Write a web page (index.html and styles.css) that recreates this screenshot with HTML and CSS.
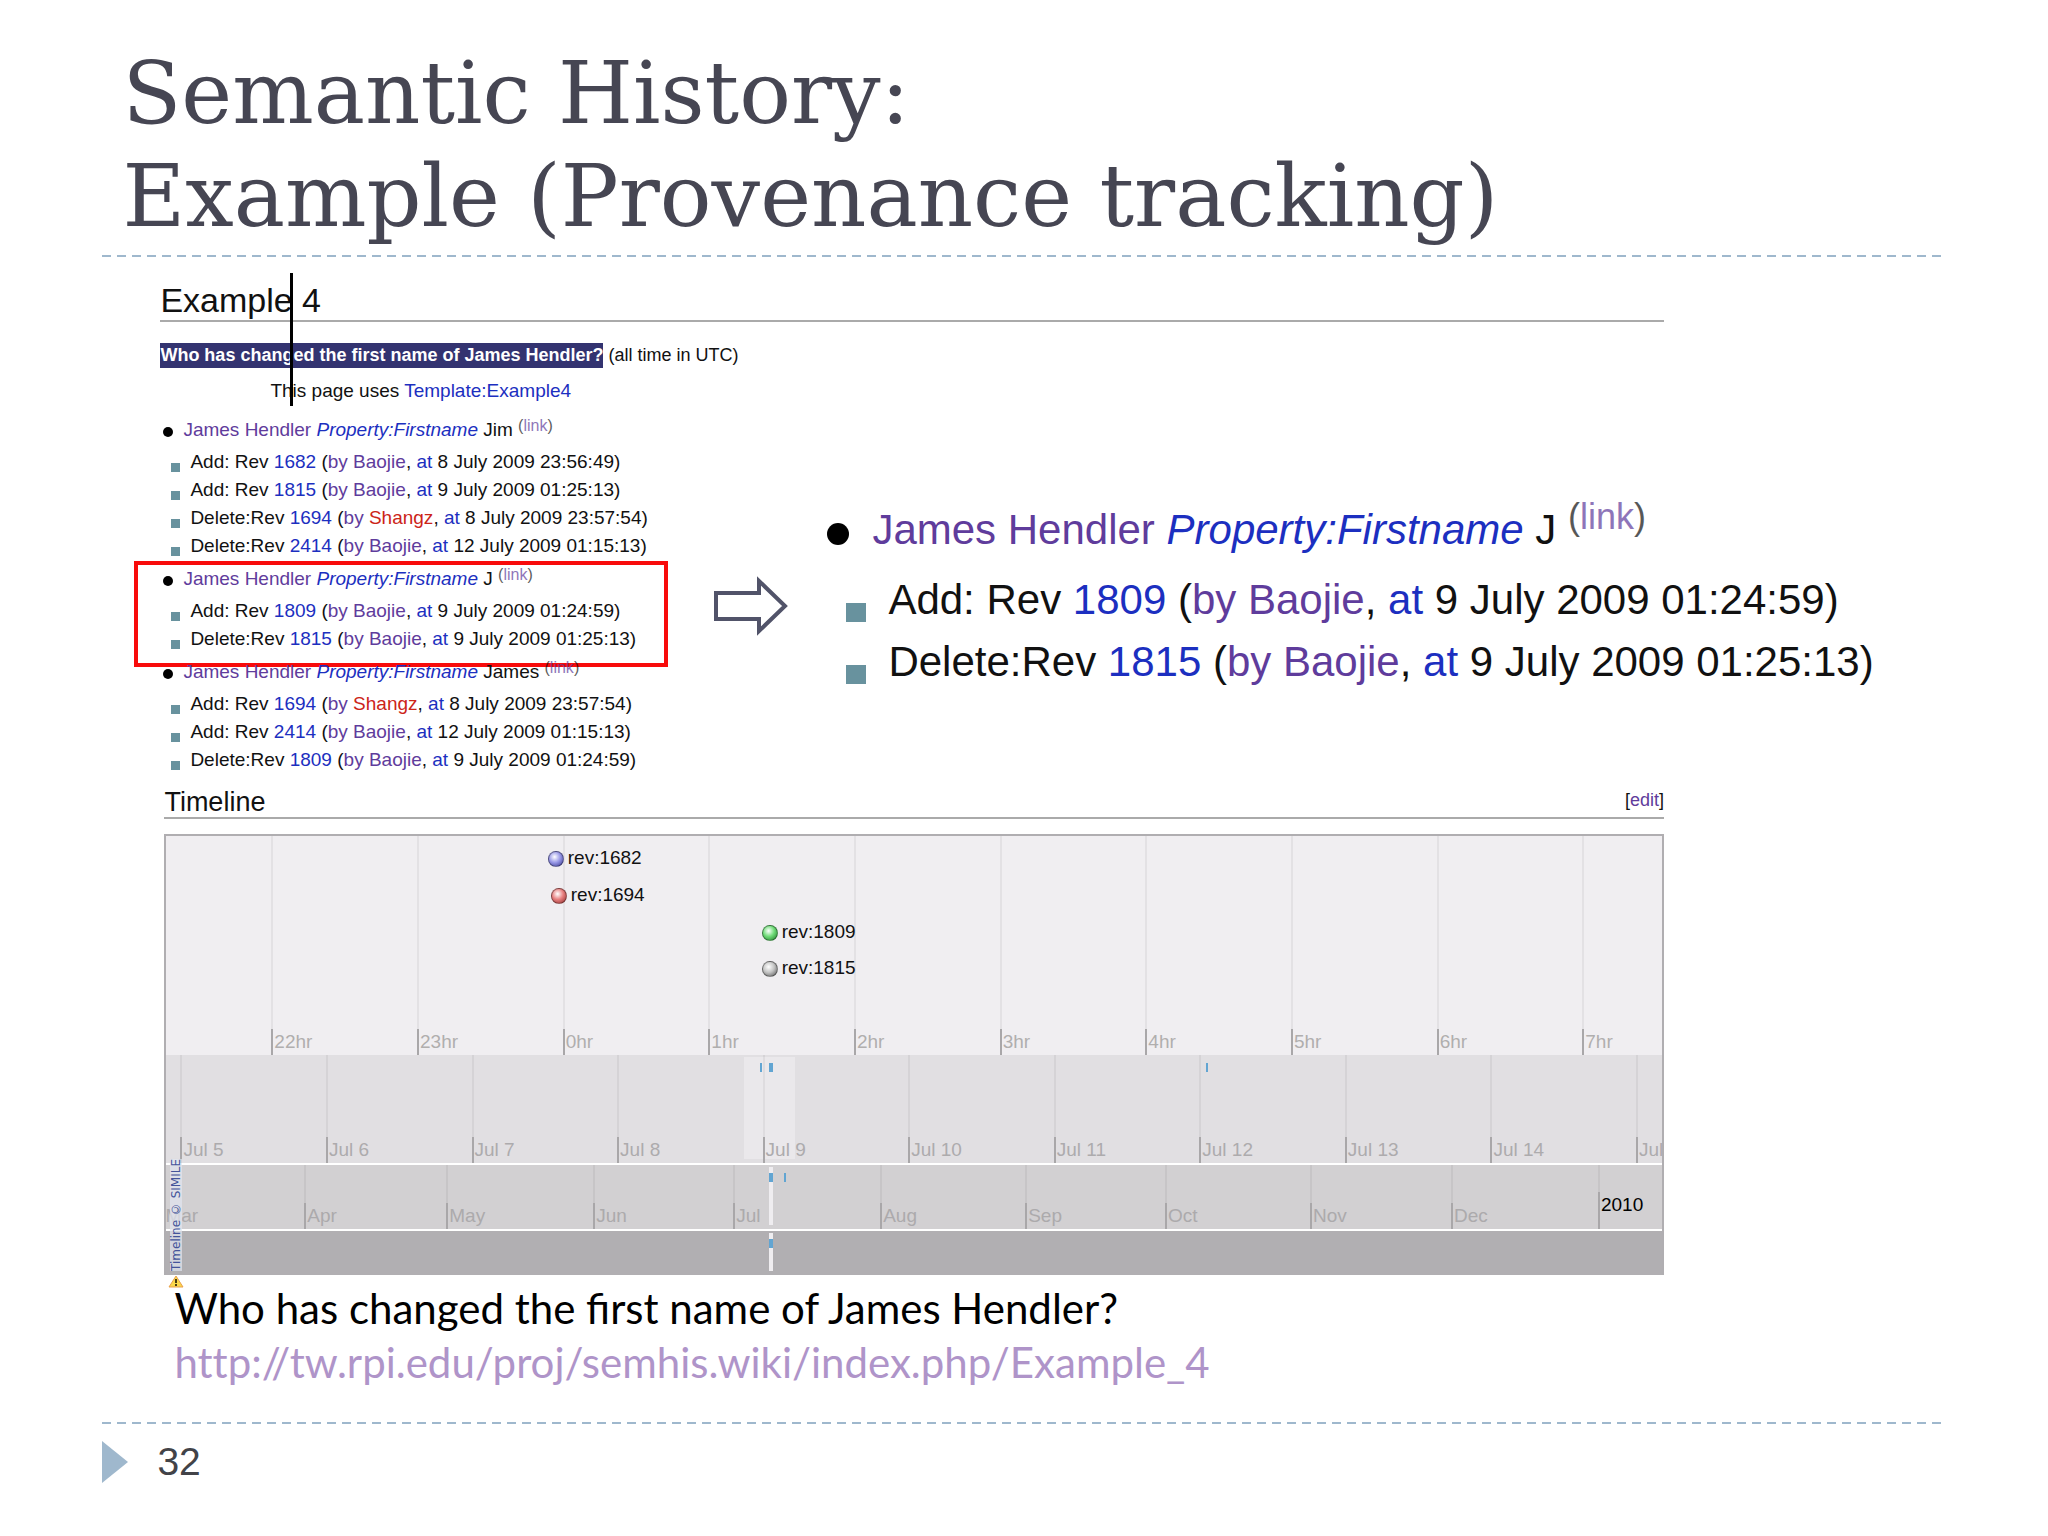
FILE: index.html
```
<!DOCTYPE html>
<html lang="en">
<head>
  <meta charset="UTF-8">
  <meta name="viewport" content="width=device-width, initial-scale=1.0">
  <title>Semantic History: Example</title>
  <link rel="stylesheet" href="styles.css">
</head>
<body>
  <div class="slide">
    <header class="slide-header">
      <h1 class="slide-title">Semantic History:<br>Example (Provenance tracking)</h1>
    </header>

    <main class="slide-body">
      <!-- Wiki page heading -->
      <section class="wiki-head">
        <h2 class="wiki-title">Example 4</h2>
        <p class="question"><strong class="selected">Who has changed the first name of James Hendler?</strong> (all time in UTC)</p>
        <p class="template">This page uses <a href="#">Template:Example4</a></p>
        <span class="cursor-line"></span>
      </section>

      <!-- Revision facts and the enlarged one -->
      <section class="compare">
        <div class="facts">
          <div class="fact">
            <h3><a class="visited" href="#">James Hendler</a> <a href="#"><em>Property:Firstname</em></a> Jim <sup>(<a class="visited" href="#">link</a>)</sup></h3>
            <ul>
              <li>Add: Rev <a href="#">1682</a> (<a class="visited" href="#">by Baojie</a>, <a href="#">at</a> 8 July 2009 23:56:49)</li>
              <li>Add: Rev <a href="#">1815</a> (<a class="visited" href="#">by Baojie</a>, <a href="#">at</a> 9 July 2009 01:25:13)</li>
              <li>Delete:Rev <a href="#">1694</a> (<a class="visited" href="#">by</a> <a class="missing" href="#">Shangz</a>, <a href="#">at</a> 8 July 2009 23:57:54)</li>
              <li>Delete:Rev <a href="#">2414</a> (<a class="visited" href="#">by Baojie</a>, <a href="#">at</a> 12 July 2009 01:15:13)</li>
            </ul>
          </div>
          <div class="fact marked">
            <h3><a class="visited" href="#">James Hendler</a> <a href="#"><em>Property:Firstname</em></a> J <sup>(<a class="visited" href="#">link</a>)</sup></h3>
            <ul>
              <li>Add: Rev <a href="#">1809</a> (<a class="visited" href="#">by Baojie</a>, <a href="#">at</a> 9 July 2009 01:24:59)</li>
              <li>Delete:Rev <a href="#">1815</a> (<a class="visited" href="#">by Baojie</a>, <a href="#">at</a> 9 July 2009 01:25:13)</li>
            </ul>
          </div>
          <div class="fact">
            <h3><a class="visited" href="#">James Hendler</a> <a href="#"><em>Property:Firstname</em></a> James <sup>(<a class="visited" href="#">link</a>)</sup></h3>
            <ul>
              <li>Add: Rev <a href="#">1694</a> (<a class="visited" href="#">by</a> <a class="missing" href="#">Shangz</a>, <a href="#">at</a> 8 July 2009 23:57:54)</li>
              <li>Add: Rev <a href="#">2414</a> (<a class="visited" href="#">by Baojie</a>, <a href="#">at</a> 12 July 2009 01:15:13)</li>
              <li>Delete:Rev <a href="#">1809</a> (<a class="visited" href="#">by Baojie</a>, <a href="#">at</a> 9 July 2009 01:24:59)</li>
            </ul>
          </div>
        </div>

        <svg class="arrow" width="74" height="60" viewBox="0 0 74 60" aria-hidden="true">
          <path d="M2 17 H45 V5 L71 30 L45 55 V43 H2 Z" fill="#fff" stroke="#515369" stroke-width="4"/>
        </svg>

        <div class="fact zoomed">
          <h3><a class="visited" href="#">James Hendler</a> <a href="#"><em>Property:Firstname</em></a> J <sup>(<a class="visited" href="#">link</a>)</sup></h3>
          <ul>
            <li>Add: Rev <a href="#">1809</a> (<a class="visited" href="#">by Baojie</a>, <a href="#">at</a> 9 July 2009 01:24:59)</li>
            <li>Delete:Rev <a href="#">1815</a> (<a class="visited" href="#">by Baojie</a>, <a href="#">at</a> 9 July 2009 01:25:13)</li>
          </ul>
        </div>
      </section>

      <!-- Timeline -->
      <section class="timeline">
        <div class="timeline-head">
          <h2>Timeline</h2>
          <span class="edit">[<a class="visited" href="#">edit</a>]</span>
        </div>
        <div class="bands">
          <div class="band hours">
            <div class="cell first"></div>
            <div class="cell"><span>22hr</span></div>
            <div class="cell"><span>23hr</span></div>
            <div class="cell"><span>0hr</span></div>
            <div class="cell"><span>1hr</span></div>
            <div class="cell"><span>2hr</span></div>
            <div class="cell"><span>3hr</span></div>
            <div class="cell"><span>4hr</span></div>
            <div class="cell"><span>5hr</span></div>
            <div class="cell"><span>6hr</span></div>
            <div class="cell"><span>7hr</span></div>
            <div class="event blue">rev:1682</div>
            <div class="event red">rev:1694</div>
            <div class="event green">rev:1809</div>
            <div class="event gray">rev:1815</div>
          </div>
          <div class="band days">
            <div class="window"></div>
            <div class="cell first"></div>
            <div class="cell"><span>Jul 5</span></div>
            <div class="cell"><span>Jul 6</span></div>
            <div class="cell"><span>Jul 7</span></div>
            <div class="cell"><span>Jul 8</span></div>
            <div class="cell"><span>Jul 9</span></div>
            <div class="cell"><span>Jul 10</span></div>
            <div class="cell"><span>Jul 11</span></div>
            <div class="cell"><span>Jul 12</span></div>
            <div class="cell"><span>Jul 13</span></div>
            <div class="cell"><span>Jul 14</span></div>
            <div class="cell"><span>Jul</span></div>
            <i class="mark day-a"></i>
            <i class="mark wide now"></i>
            <i class="mark day-b"></i>
          </div>
          <div class="band months">
            <div class="cell first"><span>Mar</span></div>
            <div class="cell"><span>Apr</span></div>
            <div class="cell"><span>May</span></div>
            <div class="cell"><span>Jun</span></div>
            <div class="cell"><span>Jul</span></div>
            <div class="cell"><span>Aug</span></div>
            <div class="cell"><span>Sep</span></div>
            <div class="cell"><span>Oct</span></div>
            <div class="cell"><span>Nov</span></div>
            <div class="cell"><span>Dec</span></div>
            <div class="cell year"><span>2010</span></div>
            <i class="needle now"></i>
            <i class="mark wide now"></i>
            <i class="mark month-a"></i>
          </div>
          <div class="band years">
            <i class="needle now"></i>
            <i class="mark wide now"></i>
          </div>
          <div class="credit">
            <span>Timeline © SIMILE</span>
            <svg width="16" height="13" viewBox="0 0 16 13" aria-hidden="true">
              <path d="M8 1 L15 12 H1 Z" fill="#fbd84a" stroke="#e9a04c" stroke-width="1"/>
              <path d="M8 4 V8 M8 9 V11" stroke="#4a3c10" stroke-width="2"/>
            </svg>
          </div>
        </div>
      </section>

      <p class="caption">Who has changed the first name of James Hendler?<br><a href="#">http://tw.rpi.edu/proj/semhis.wiki/index.php/Example_4</a></p>
    </main>

    <footer class="slide-footer">
      <svg width="26" height="42" viewBox="0 0 26 42" aria-hidden="true">
        <path d="M0 0 L26 21 L0 42 Z" fill="#9fb8cd"/>
      </svg>
      <span class="page-number">32</span>
    </footer>
  </div>
</body>
</html>
```
FILE: styles.css
```
:root {
  --rule: #9fb8cd;
  --title: #464653;
  --link: #1c2fc0;
  --visited: #5f3c9c;
  --missing: #cc2418;
  --bullet: #68929e;
  --line: #aaaaaa;
  --mark: #62a5d2;
  --wiki-width: calc(84% + 4px);
}

* {
  margin: 0;
  padding: 0;
  box-sizing: border-box;
}

body {
  font-family: "Liberation Sans", Arial, sans-serif;
  background: #fff;
  color: #111;
}

a {
  color: var(--link);
  text-decoration: none;
}

a.visited {
  color: var(--visited);
}

a.missing {
  color: var(--missing);
}

.slide {
  padding: 42px 5% 0;
}

/* Dashed rules above and below the content */
.slide-header,
.slide-footer {
  background: repeating-linear-gradient(to right, var(--rule) 0 9px, transparent 9px 15px) no-repeat;
  background-size: 100% 2px;
}

.slide-header {
  padding: 0 0 9px 20px;
  background-position: left bottom;
}

.slide-title {
  font-family: "DejaVu Serif", serif;
  font-size: 86px;
  font-weight: 400;
  line-height: 103px;
  color: var(--title);
}

.slide-body {
  padding-left: 58px;
}

/* Wiki heading */
.wiki-head {
  position: relative;
  width: var(--wiki-width);
  margin-top: 23px;
}

.wiki-title {
  font-size: 34px;
  font-weight: 400;
  line-height: 40px;
  border-bottom: 2px solid var(--line);
}

.question {
  margin-top: 21px;
  font-size: 18px;
  line-height: 25px;
}

.selected {
  display: inline-block;
  background: #333370;
  color: #fff;
}

.template {
  margin-top: 9px;
  padding-left: 110px;
  font-size: 19px;
  line-height: 28px;
}

.cursor-line {
  position: absolute;
  left: 130px;
  top: -7px;
  width: 3px;
  height: 133px;
  background: #000;
}

/* Revision facts */
.compare {
  display: flex;
  align-items: flex-start;
  margin-top: 10px;
}

.facts {
  width: 554px;
  flex-shrink: 0;
}

.fact {
  position: relative;
  padding-bottom: 4px;
  font-size: 19px;
  white-space: nowrap;
}

.fact h3 {
  margin-bottom: 3px;
  font-size: 19px;
  font-weight: 400;
  line-height: 30px;
}

.fact h3::before {
  content: "";
  display: inline-block;
  width: 10px;
  height: 10px;
  margin: 0 10px 0 3px;
  border-radius: 50%;
  background: #000;
  vertical-align: -1px;
}

.fact sup {
  font-size: 16px;
  line-height: 0;
  vertical-align: 5px;
  opacity: 0.7;
}

.fact ul {
  list-style: none;
}

.fact li {
  line-height: 28px;
}

.fact li::before {
  content: "";
  display: inline-block;
  width: 9px;
  height: 9px;
  margin: 0 10px 0 11px;
  background: var(--bullet);
  vertical-align: -4px;
}

.marked::after {
  content: "";
  position: absolute;
  left: -26px;
  right: 46px;
  top: -3px;
  bottom: -10px;
  border: 4px solid #f80b0b;
}

.arrow {
  flex-shrink: 0;
  margin: 161px 38px 0 0;
}

.zoomed {
  margin-top: 84px;
  font-size: 42px;
}

.zoomed h3 {
  margin-bottom: 8px;
  font-size: 42px;
  line-height: 62px;
}

.zoomed h3::before {
  width: 22px;
  height: 22px;
  margin: 0 23px 0 1px;
}

.zoomed sup {
  font-size: 36px;
  vertical-align: 15px;
}

.zoomed li {
  line-height: 62px;
}

.zoomed li::before {
  width: 20px;
  height: 19px;
  margin: 0 22px 0 20px;
  vertical-align: -8px;
}

/* Timeline */
.timeline {
  width: 84%;
  margin: 9px 0 0 4px;
}

.timeline-head {
  display: flex;
  justify-content: space-between;
  border-bottom: 2px solid var(--line);
  line-height: 30px;
}

.timeline-head h2 {
  font-size: 27px;
  font-weight: 400;
}

.edit {
  font-size: 18px;
  line-height: 26px;
}

.bands {
  position: relative;
  margin-top: 15px;
  border: 2px solid #b0aeb1;
  border-bottom: none;
}

.band {
  position: relative;
  display: grid;
  overflow: hidden;
  font-size: 19px;
}

.hours {
  grid-template-columns: 1050fr repeat(9, 1457fr) 797fr;
  height: 219px;
  background: #f0eef1;
}

.days {
  grid-template-columns: 140fr repeat(10, 1456fr) 260fr;
  height: 110px;
  background: #e1dfe2;
  border-bottom: 2px solid #fff;
}

.months {
  grid-template-columns: 138fr 142fr 147fr 140fr 147fr 145fr 140fr 145fr 141fr 147fr 64fr;
  height: 66px;
  background: #d2d0d2;
  border-bottom: 2px solid #fff;
}

.years {
  height: 44px;
  background: #b1afb2;
}

.cell {
  position: relative;
  display: flex;
  align-items: flex-end;
  min-width: 0;
  white-space: nowrap;
  border-left: 2px solid rgba(0, 0, 0, 0.05);
}

.cell span {
  height: 26px;
  margin-left: -2px;
  padding-left: 1px;
  line-height: 25px;
  border-left: 2px solid #a9a7a9;
  color: #b0aeae;
}

.days .cell span {
  color: #adabad;
}

.months .cell span {
  color: #acaaac;
}

.cell.first,
.cell.first span {
  border-left: none;
}

.months .year span {
  height: 37px;
  color: #000;
}

.event {
  position: absolute;
  display: flex;
  align-items: center;
  gap: 4px;
  color: #111;
  line-height: 24px;
}

.event::before {
  content: "";
  width: 14px;
  height: 14px;
  margin-top: 2px;
  border: 1px solid rgba(0, 0, 0, 0.35);
  border-radius: 50%;
  background: radial-gradient(circle at 40% 35%, #fff, var(--dot) 45%, var(--edge));
}

.blue {
  --dot: #9a9ae8;
  --edge: #32328c;
  left: 25.5%;
  top: 10px;
}

.red {
  --dot: #e88080;
  --edge: #8c2828;
  left: 25.7%;
  top: 47px;
}

.green {
  --dot: #70dc78;
  --edge: #1c7828;
  left: 39.8%;
  top: 84px;
}

.gray {
  --dot: #c4c4c4;
  --edge: #505050;
  left: 39.8%;
  top: 120px;
}

.window {
  position: absolute;
  left: 38.6%;
  top: 2px;
  width: 51px;
  height: 102px;
  background: rgba(255, 255, 255, 0.3);
}

.mark {
  position: absolute;
  top: 8px;
  width: 2px;
  height: 9px;
  background: var(--mark);
}

.mark.wide {
  width: 4px;
}

.needle {
  position: absolute;
  top: 2px;
  bottom: 4px;
  width: 4px;
  background: #efedf0;
}

.now {
  left: 40.3%;
}

.day-a {
  left: 39.7%;
}

.day-b {
  left: 69.5%;
}

.month-a {
  left: 41.3%;
}

.credit {
  position: absolute;
  left: 2px;
  bottom: -13px;
  display: flex;
  flex-direction: column;
  align-items: center;
  gap: 4px;
}

.credit span {
  writing-mode: vertical-rl;
  transform: rotate(180deg);
  font-family: "DejaVu Sans", sans-serif;
  font-size: 12px;
  line-height: 12px;
  color: #44549a;
  background: rgba(225, 230, 240, 0.7);
}

/* Caption and footer */
.caption {
  margin-top: 6px;
  padding-left: 14px;
  font-family: Lato, sans-serif;
  font-size: 42px;
  line-height: 54px;
  color: #000;
}

.caption a {
  color: #af94c9;
  font-variant-ligatures: none;
}

.slide-footer {
  display: flex;
  gap: 29px;
  margin-top: 33px;
  padding-top: 19px;
}

.page-number {
  font-size: 39px;
  line-height: 41px;
  color: #424348;
}
```
